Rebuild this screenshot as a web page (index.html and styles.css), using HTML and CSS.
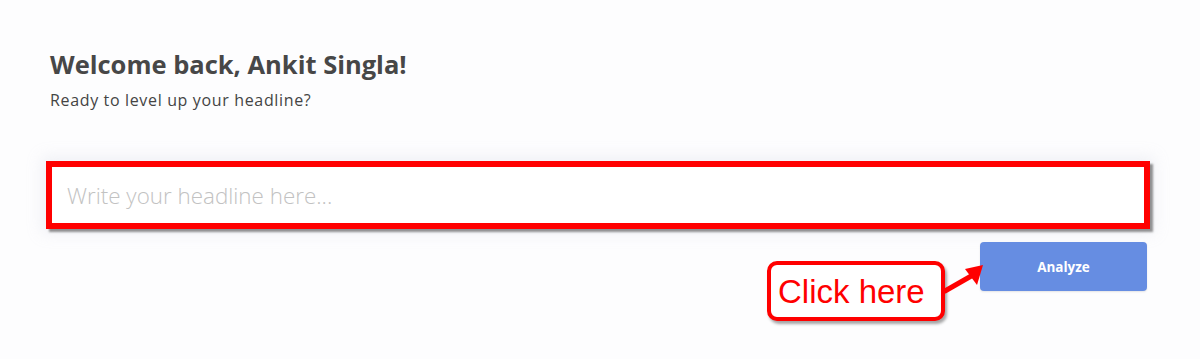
FILE: index.html
```html
<!DOCTYPE html>
<html>
<head>
<meta charset="utf-8">
<link rel="stylesheet" href="styles.css">
</head>
<body>
<main class="page">
  <h1 class="title">Welcome back, Ankit Singla!</h1>
  <p class="subtitle">Ready to level up your headline?</p>
  <div class="input-wrap">
    <div class="input-box">
      <span class="placeholder">Write your headline here...</span>
    </div>
  </div>
  <div class="actions">
    <div class="callout">
      <span class="callout-text">Click here</span>
      <svg class="arrow" width="44" height="34" viewBox="0 0 44 34">
        <path d="M2 30 L30 14" stroke="#ff0000" stroke-width="5" fill="none" stroke-linecap="round"/>
        <polygon points="40,4 22,8 34,24" fill="#ff0000"/>
      </svg>
    </div>
    <button class="analyze">Analyze</button>
  </div>
</main>
</body>
</html>
```
FILE: styles.css
```css
html, body {
  margin: 0;
  background: #fdfdfe;
}
body {
  min-height: 359px;
}
.page {
  padding: 46px 50px 0 46px;
  font-family: "Open Sans", Lato, sans-serif;
  position: relative;
  min-height: 313px;
}
.title {
  margin: 0 0 0 4px;
  font-size: 25.5px;
  font-weight: 700;
  color: #474747;
  line-height: 36px;
}
.subtitle {
  margin: 8px 0 0 4px;
  font-size: 16px;
  letter-spacing: 0.65px;
  color: #444;
  line-height: 20px;
}
.input-wrap {
  margin-top: 51px;
  width: 1104px;
  box-shadow: 0 0 14px 4px rgba(200, 205, 220, 0.25);
}
.input-box {
  box-sizing: border-box;
  height: 68px;
  border: 6px solid #ff0000;
  background: #fff;
  box-shadow: 3px 3px 2px rgba(60, 60, 60, 0.55);
  display: flex;
  align-items: center;
  padding-left: 15px;
}
.placeholder {
  font-size: 22.4px;
  color: #c2c2c2;
  font-weight: 300;
}
.actions {
  display: flex;
  justify-content: flex-end;
  width: 1101px;
  margin-top: 13px;
  position: relative;
  height: 90px;
}
.analyze {
  width: 167px;
  height: 49px;
  border: none;
  border-radius: 4px;
  background: #668de2;
  color: #fff;
  font-family: "Open Sans", sans-serif;
  font-weight: 700;
  font-size: 13.5px;
  box-shadow: 0 1px 2px rgba(0,0,0,0.1);
}
.callout {
  position: absolute;
  left: 721px;
  top: 19px;
  width: 178px;
  height: 60px;
  box-sizing: border-box;
  border: 4px solid #ff0000;
  border-radius: 10px;
  background: #fff;
  box-shadow: 2px 3px 3px rgba(0,0,0,0.35);
  display: flex;
  align-items: center;
  padding-left: 7px;
}
.callout-text {
  font-family: "Liberation Sans", Arial, sans-serif;
  font-size: 33px;
  color: #ff0000;
  line-height: 1;
}
.arrow {
  position: absolute;
  left: 172px;
  top: -4px;
}
```
